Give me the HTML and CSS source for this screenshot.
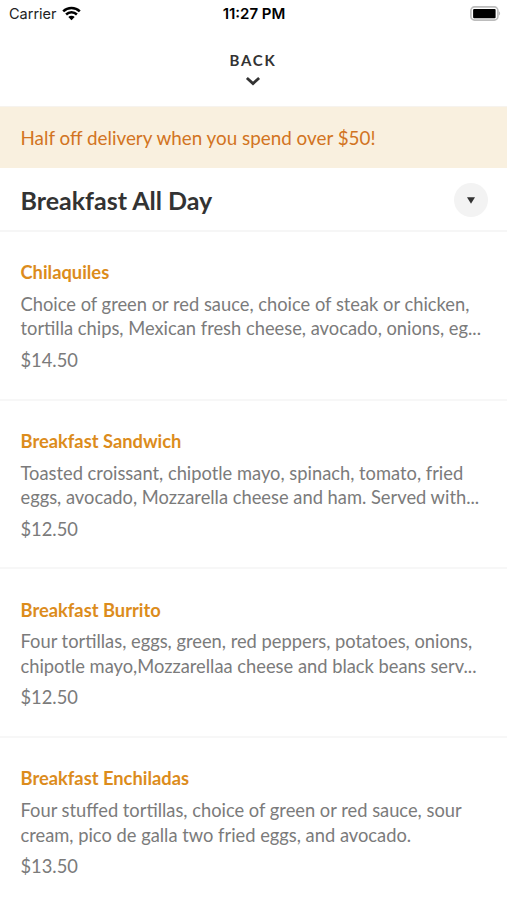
FILE: index.html
```html
<!DOCTYPE html>
<html lang="en">
<head>
    <meta charset="UTF-8">
    <meta name="viewport" content="width=device-width, initial-scale=1.0">
    <title>Breakfast All Day</title>
    <link rel="stylesheet" href="styles.css">
</head>
<body>
    <div class="status-bar">
        <div class="carrier">
            <span>Carrier</span>
            <svg class="wifi" width="19" height="15" viewBox="0 0 19 15">
                <path d="M1.2 5.3a11.9 11.9 0 0 1 16.6 0M4.1 8.5a7.7 7.7 0 0 1 10.8 0" fill="none" stroke="#000" stroke-width="2.5"/>
                <path d="M9.5 14.3L6.3 11a4.6 4.6 0 0 1 6.4 0z"/>
            </svg>
        </div>
        <div class="time">11:27 PM</div>
        <svg class="battery" width="31" height="15" viewBox="0 0 31 15">
            <rect x="0.9" y="0.9" width="27" height="13.2" rx="3.6" fill="#fff" stroke="#bcbcbc" stroke-width="1.6"/>
            <rect x="3.1" y="3" width="22.5" height="9.2" rx="1"/>
            <path d="M28.7 5.3v4.4a2.4 2.4 0 0 0 0-4.4z" fill="#bcbcbc"/>
        </svg>
    </div>

    <header class="back">
        <span>BACK</span>
        <svg width="16" height="10" viewBox="0 0 16 10">
            <path d="M1.9 1.9L8 7.6l6.1-5.7" fill="none" stroke="#333" stroke-width="2.8"/>
        </svg>
    </header>

    <div class="promo">Half off delivery when you spend over $50!</div>

    <div class="section-title">
        <h1>Breakfast All Day</h1>
        <button class="toggle" type="button" aria-label="Choose section">
            <svg width="8" height="7" viewBox="0 0 8 7"><path d="M0 0.3h8L4 6.7z" fill="#333"/></svg>
        </button>
    </div>

    <main class="menu">
        <article class="item">
            <h2>Chilaquiles</h2>
            <p class="description">Choice of green or red sauce, choice of steak or chicken,<br>tortilla chips, Mexican fresh cheese, avocado, onions, eg...</p>
            <p class="price">$14.50</p>
        </article>
        <article class="item">
            <h2>Breakfast Sandwich</h2>
            <p class="description">Toasted croissant, chipotle mayo, spinach, tomato, fried<br>eggs, avocado, Mozzarella cheese and ham. Served with...</p>
            <p class="price">$12.50</p>
        </article>
        <article class="item">
            <h2>Breakfast Burrito</h2>
            <p class="description">Four tortillas, eggs, green, red peppers, potatoes, onions,<br>chipotle mayo,Mozzarellaa cheese and black beans serv...</p>
            <p class="price">$12.50</p>
        </article>
        <article class="item">
            <h2>Breakfast Enchiladas</h2>
            <p class="description">Four stuffed tortillas, choice of green or red sauce, sour<br>cream, pico de galla two fried eggs, and avocado.</p>
            <p class="price">$13.50</p>
        </article>
    </main>
</body>
</html>
```
FILE: styles.css
```css
* {
    box-sizing: border-box;
}

body {
    margin: 0;
    height: 900px;
    overflow: hidden;
    background: #fff;
    color: #333;
    font-family: Lato, sans-serif;
}

h1, h2, p {
    margin: 0;
}

/* Phone status bar */
.status-bar {
    display: grid;
    grid-template-columns: 1fr auto 1fr;
    align-items: center;
    height: 28px;
    padding: 0 6px 2px 9px;
    color: #000;
    font-family: Inter, sans-serif;
    font-size: 14.5px;
}

.carrier {
    display: flex;
    align-items: center;
    gap: 5px;
}

.carrier span {
    color: #222;
}

.time {
    padding-right: 2px;
    font-size: 15px;
    font-weight: 600;
}

.battery {
    justify-self: end;
}

/* Back header */
.back {
    display: flex;
    flex-direction: column;
    align-items: center;
    height: 78px;
    padding: 22px 1px 0 0;
    font-size: 15px;
    font-weight: 700;
    line-height: 20px;
    letter-spacing: 1.8px;
}

.back svg {
    margin-top: 6px;
}

.promo {
    height: 62px;
    padding-left: 20.5px;
    border-top: 1px solid #f6f3ee;
    background: #f9f0df;
    color: #d27422;
    font-size: 18.85px;
    line-height: 62px;
}

.section-title {
    display: flex;
    align-items: center;
    justify-content: space-between;
    height: 64px;
    padding: 2px 19px 0 20.5px;
    border-bottom: 2px solid #f6f6f6;
}

.section-title h1 {
    font-size: 25px;
    line-height: 32px;
}

.toggle {
    display: flex;
    align-items: center;
    justify-content: center;
    width: 34px;
    height: 34px;
    padding: 0;
    border: none;
    border-radius: 50%;
    background: #f3f3f3;
}

/* Menu items */
.item {
    height: 168.7px;
    padding: 27.4px 20px 0 20.5px;
    border-bottom: 2px solid #f7f7f7;
    color: #7b7b7b;
    font-size: 18.32px;
}

.item h2 {
    color: #dc8c1c;
    font-size: 18.32px;
    line-height: 26px;
}

.description {
    margin-top: 6.6px;
    line-height: 24.5px;
    white-space: nowrap;
}

.price {
    margin-top: 7px;
    line-height: 25px;
}
```
